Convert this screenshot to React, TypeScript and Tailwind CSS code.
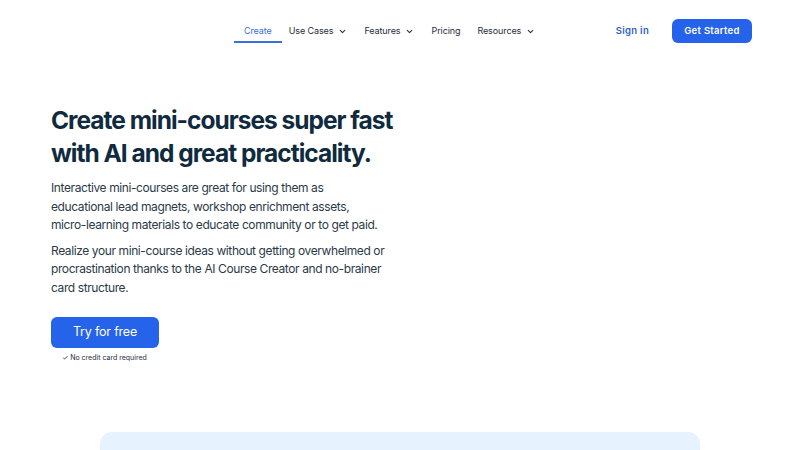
import { ChevronDown } from "lucide-react";

const navItems = [
  { label: "Create", active: true, menu: false },
  { label: "Use Cases", active: false, menu: true },
  { label: "Features", active: false, menu: true },
  { label: "Pricing", active: false, menu: false },
  { label: "Resources", active: false, menu: true },
];

export default function App() {
  return (
    <div className="min-h-[450px] bg-white overflow-hidden" style={{ fontFamily: "Inter, 'Noto Sans', sans-serif" }}>
      <header className="flex h-[62px] items-center whitespace-nowrap">
        <nav className="ml-[234px] flex h-full items-center gap-[17px]">
          {navItems.map((item) => (
            <div
              key={item.label}
              className={
                item.active
                  ? "relative -mr-[10px] flex h-full items-center px-[10px] text-[9px] tracking-[-0.1px] text-[#3b6fd8]"
                  : "flex h-full items-center gap-[5px] text-[9px] tracking-[-0.1px] text-[#1f2d3d]"
              }
            >
              <span>{item.label}</span>
              {item.menu && <ChevronDown className="h-[9px] w-[9px]" strokeWidth={2.75} />}
              {item.active && (
                <span className="absolute bottom-[19px] left-0 right-0 h-[2px] bg-[#3b6fd8]" />
              )}
            </div>
          ))}
        </nav>
        <a className="ml-auto text-[9.5px] font-semibold tracking-[0.3px] text-[#2f5fc6]">Sign in</a>
        <button className="ml-[23px] mr-[48px] h-[24px] w-[80px] rounded-[6px] bg-[#2563eb] text-[9.5px] font-semibold tracking-[0.3px] text-white">
          Get Started
        </button>
      </header>

      <main className="pl-[51px] pt-[42px]">
        <h1 className="text-[24.5px] font-bold leading-[33px] tracking-[-1px] text-[#102a3e]">
          Create mini-courses super fast
          <br />
          with AI and great practicality.
        </h1>
        <p className="mt-[9px] text-[12px] leading-[18.5px] tracking-[-0.4px] text-[#2b3a47]">
          Interactive mini-courses are great for using them as
          <br />
          educational lead magnets, workshop enrichment assets,
          <br />
          micro-learning materials to educate community or to get paid.
        </p>
        <p className="mt-[7px] text-[12px] leading-[18.5px] tracking-[-0.4px] text-[#2b3a47]">
          Realize your mini-course ideas without getting overwhelmed or
          <br />
          procrastination thanks to the AI Course Creator and no-brainer
          <br />
          card structure.
        </p>
        <button className="mt-[20px] h-[31px] w-[108px] rounded-[6px] bg-[#2563eb] text-[12.5px] tracking-[-0.2px] text-white">
          Try for free
        </button>
        <div className="ml-[11px] mt-[5px] text-[7px] text-[#1f2d3d]">✓ No credit card required</div>
      </main>

      <div className="mx-auto mt-[68px] h-[40px] w-[600px] rounded-t-[12px] bg-[#e6f2fd]" />
    </div>
  );
}
